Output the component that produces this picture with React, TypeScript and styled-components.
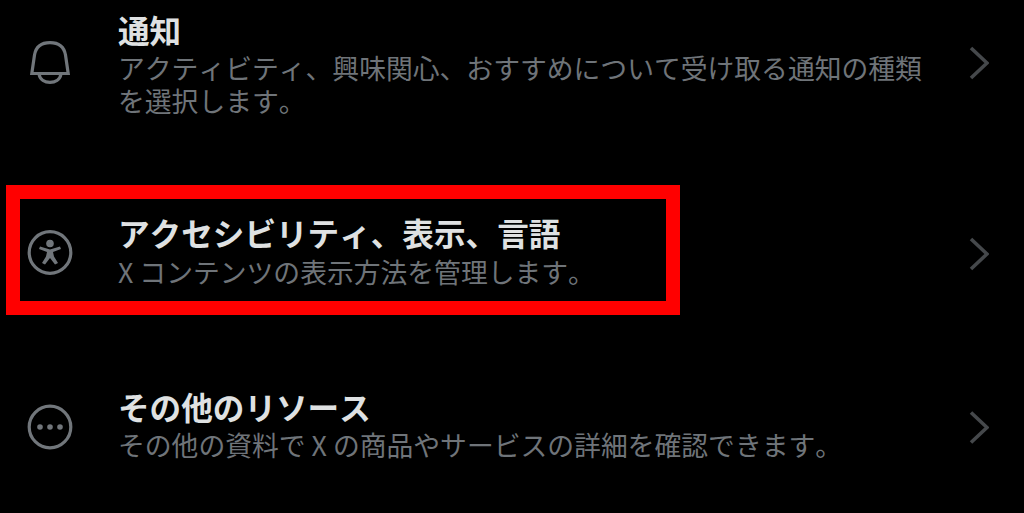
import React from "react";
import styled, { createGlobalStyle } from "styled-components";

const Global = createGlobalStyle`
  html, body { margin: 0; padding: 0; background: #000; }
  body { width: 1024px; height: 513px; overflow: hidden; font-family: "Noto Sans CJK JP", "Noto Sans", sans-serif; font-kerning: none; }
`;

const Page = styled.div`
  width: 1024px;
  height: 513px;
  background: #000;
  overflow: hidden;
  display: flex;
  flex-direction: column;
  padding: 9px 0 0 6px;
  box-sizing: border-box;
`;

const Row = styled.div<{ $height: number; $mt?: number }>`
  display: grid;
  grid-template-columns: 88px 1fr 44px;
  align-items: center;
  box-sizing: border-box;
  width: 1018px;
  height: ${(p) => p.$height}px;
  margin-top: ${(p) => p.$mt ?? 0}px;
  position: relative;
`;

const Frame = styled.div`
  position: absolute;
  left: 0;
  top: 0;
  width: 674px;
  height: 130px;
  border: 14px solid #ff0000;
  box-sizing: border-box;
`;

const IconCell = styled.div<{ $shift?: number }>`
  display: flex;
  justify-content: center;
  width: 88px;
  transform: translateY(${(p) => p.$shift ?? 0}px);
`;

const TextCell = styled.div`
  display: flex;
  flex-direction: column;
  margin-left: 24px;
`;

const Title = styled.div`
  color: #dfe1e2;
  font-size: 31.6px;
  line-height: 40px;
  font-weight: 700;
  white-space: nowrap;
`;

const Sub = styled.div<{ $gap?: number }>`
  color: #6f7479;
  font-size: 26.8px;
  line-height: 33px;
  width: 812px;
  margin-top: ${(p) => p.$gap ?? 0}px;
`;

const Chevron = styled.div<{ $shift?: number }>`
  display: flex;
  justify-content: center;
  margin-left: -46px;
  transform: translateY(${(p) => p.$shift ?? 0}px);
`;

const ChevronIcon = () => (
  <svg width="20" height="34" viewBox="0 0 20 34" fill="none">
    <path d="M2 2 L18 17 L2 32" stroke="#45484b" strokeWidth="3.6" />
  </svg>
);

const Bell = () => (
  <svg width="40" height="43" viewBox="0 0 40 43" fill="none" stroke="#71767b" strokeWidth="3.2">
    <path d="M1.8 32.5 L4.5 14 C6 5.5 12 1.7 20 1.7 C28 1.7 34 5.5 35.5 14 L38.2 32.5 Z" />
    <path d="M9 33 C10 39 15 41.3 20 41.3 C25 41.3 30 39 31 33" />
  </svg>
);

const Access = () => (
  <svg width="46" height="46" viewBox="0 0 46 46" fill="none">
    <circle cx="23" cy="23" r="20.8" stroke="#71767b" strokeWidth="3.2" />
    <circle cx="23" cy="14" r="3.8" fill="#71767b" />
    <path d="M12 19.5 L20 22.5 L19 27 L15 33.5 L18 35 L23 28.5 L28 35 L31 33.5 L27 27 L26 22.5 L34 19.5 L33 17 L23 20 L13 17 Z" fill="#71767b" />
  </svg>
);

const More = () => (
  <svg width="46" height="46" viewBox="0 0 46 46" fill="none">
    <circle cx="23" cy="23" r="20.8" stroke="#71767b" strokeWidth="3.2" />
    <circle cx="13" cy="23" r="2.8" fill="#71767b" />
    <circle cx="23" cy="23" r="2.8" fill="#71767b" />
    <circle cx="33" cy="23" r="2.8" fill="#71767b" />
  </svg>
);

export default function App() {
  return (
    <Page>
      <Global />
      <Row $height={101}>
        <IconCell $shift={-1}><Bell /></IconCell>
        <TextCell>
          <Title>通知</Title>
          <Sub $gap={2}>アクティビティ、興味関心、おすすめについて受け取る通知の種類を選択します。</Sub>
        </TextCell>
        <Chevron><ChevronIcon /></Chevron>
      </Row>
      <Row $height={130} $mt={75}>
        <Frame />
        <IconCell $shift={2.5}><Access /></IconCell>
        <TextCell>
          <Title>アクセシビリティ、表示、言語</Title>
          <Sub $gap={3}>X コンテンツの表示方法を管理します。</Sub>
        </TextCell>
        <Chevron $shift={4}><ChevronIcon /></Chevron>
      </Row>
      <Row $height={77} $mt={70}>
        <IconCell $shift={3}><More /></IconCell>
        <TextCell>
          <Title>その他のリソース</Title>
          <Sub $gap={2}>その他の資料で X の商品やサービスの詳細を確認できます。</Sub>
        </TextCell>
        <Chevron $shift={3.5}><ChevronIcon /></Chevron>
      </Row>
    </Page>
  );
}
